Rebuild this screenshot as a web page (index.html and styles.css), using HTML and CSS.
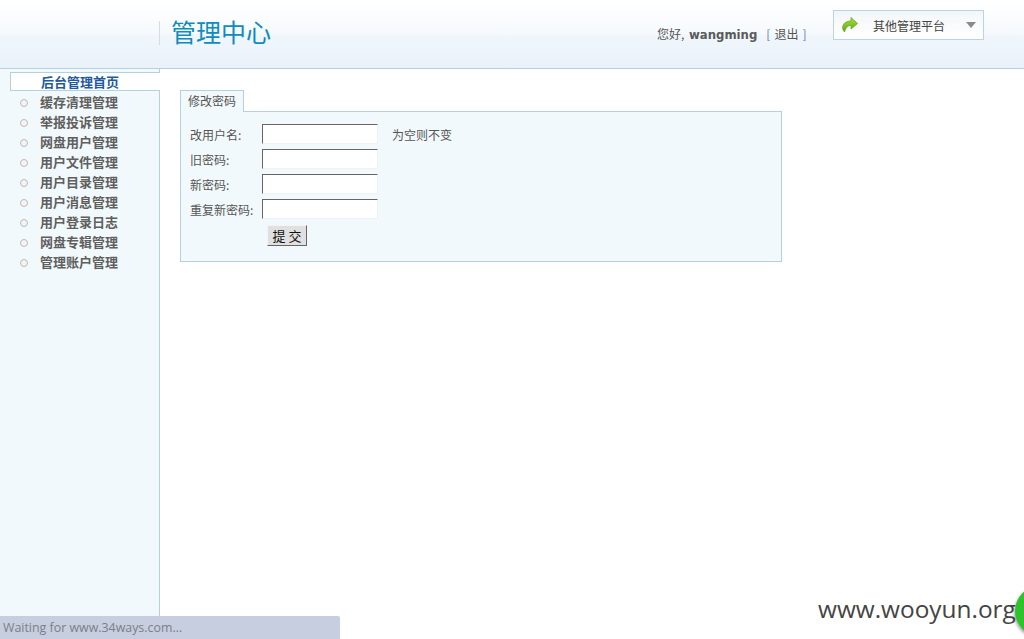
FILE: index.html
```html
<!DOCTYPE html>
<html lang="zh-CN">
<head>
<meta charset="utf-8">
<title>管理中心</title>
<link rel="stylesheet" href="styles.css">
</head>
<body>
<header class="header">
  <div class="logo"><h1 class="title">管理中心</h1></div>
  <div class="user">您好<span class="comma">,</span> <b class="name">wangming</b><a class="logout"><span class="br">[</span><span class="out">退出</span><span class="br">]</span></a></div>
  <div class="switch">
    <svg class="switch-icon" width="16" height="16" viewBox="0 0 16 16"><defs><linearGradient id="arrow" x1="0" y1="0" x2="0" y2="1"><stop offset="0" stop-color="#a8e040"/><stop offset="1" stop-color="#5da814"/></linearGradient></defs><path d="M9 0.5 L15.5 6.5 L9 12 V8.5 C6 8.5 4 10 2.5 15 C0.5 13 0 10 1.5 7.5 C3 5 6 4 9 4 Z" fill="url(#arrow)" stroke="#6aa81a" stroke-width="0.8"/></svg>
    <span class="switch-text">其他管理平台</span>
    <span class="caret"></span>
  </div>
</header>
<div class="main">
  <nav class="side">
    <a class="item active">后台管理首页</a>
    <a class="item"><i class="dot"></i>缓存清理管理</a>
    <a class="item"><i class="dot"></i>举报投诉管理</a>
    <a class="item"><i class="dot"></i>网盘用户管理</a>
    <a class="item"><i class="dot"></i>用户文件管理</a>
    <a class="item"><i class="dot"></i>用户目录管理</a>
    <a class="item"><i class="dot"></i>用户消息管理</a>
    <a class="item"><i class="dot"></i>用户登录日志</a>
    <a class="item"><i class="dot"></i>网盘专辑管理</a>
    <a class="item"><i class="dot"></i>管理账户管理</a>
  </nav>
  <section class="content">
    <div class="tab">修改密码</div>
    <form class="panel">
      <div class="row"><label class="label">改用户名:</label><input class="field" type="text"><span class="hint">为空则不变</span></div>
      <div class="row"><label class="label">旧密码:</label><input class="field" type="password"></div>
      <div class="row"><label class="label">新密码:</label><input class="field" type="password"></div>
      <div class="row"><label class="label">重复新密码:</label><input class="field" type="password"></div>
      <div class="actions"><button class="submit" type="button">提 交</button></div>
    </form>
  </section>
</div>
<div class="status">Waiting for www.34ways.com...</div>
<div class="mark">www.wooyun.org</div>
<div class="ball"></div>
</body>
</html>
```
FILE: styles.css
```css
* { box-sizing: border-box; }
html, body { margin: 0; height: 100%; }
body {
  width: 1024px;
  height: 639px;
  overflow: hidden;
  position: relative;
  display: flex;
  flex-direction: column;
  background: #fff;
  color: #555;
  font: 12px "Noto Sans CJK SC", "Liberation Sans", sans-serif;
}
.header {
  height: 69px;
  flex: none;
  display: flex;
  border-bottom: 1px solid #b4d2dc;
  background: linear-gradient(#fff 0, #f6fafd 34px, #f0f6fc 35px, #eaf2f9 68px);
}
.logo {
  width: 160px;
  height: 24px;
  margin-top: 21px;
  border-right: 1px solid #d2dee4;
  flex: none;
}
.title {
  margin: -7px 0 0 171px;
  width: 120px;
  font-size: 25px;
  line-height: 34px;
  font-weight: 400;
  color: #0f8cc0;
  white-space: nowrap;
}
.user {
  margin: 25px 0 0 497px;
  width: 176px;
  flex: none;
  line-height: 18px;
  white-space: nowrap;
  color: #555;
}
.name { font: bold 11.7px "DejaVu Sans", sans-serif; color: #5a5a5a; margin-left: 2px; }
.logout { margin-left: 9px; }
.br { color: #5a82b0; }
.out { margin: 0 4px; }
.switch {
  width: 151px;
  height: 30px;
  margin-top: 10px;
  flex: none;
  display: flex;
  align-items: center;
  padding-left: 9px;
  border: 1px solid #bcd4df;
  background: linear-gradient(#f3f6f8, #fff);
}
.switch-icon { flex: none; margin-left: -1px; }
.switch-text { margin-left: 15px; color: #444; white-space: nowrap; }
.caret {
  margin-left: 21px;
  width: 0;
  height: 0;
  border-left: 5px solid transparent;
  border-right: 5px solid transparent;
  border-top: 6px solid #8a8a8a;
}
.main { flex: 1; display: flex; min-height: 0; }
.side {
  width: 160px;
  flex: none;
  padding: 3px 0 0 10px;
  background: #f2f9fc;
  border-right: 1px solid #b4d2dc;
  display: flex;
  flex-direction: column;
}
.item {
  height: 20px;
  display: flex;
  align-items: center;
  padding-left: 30px;
  padding-bottom: 2px;
  font-size: 13px;
  font-weight: 700;
  color: #5f5f5f;
  white-space: nowrap;
}
.item.active {
  height: 19px;
  margin-right: -1px;
  padding-left: 30px;
  padding-bottom: 1px;
  margin-bottom: 1px;
  background: #fff;
  color: #1f5a9e;
  border: 1px solid #b4d2dc;
  border-right: 0;
}
.dot {
  width: 8px;
  height: 8px;
  margin: 4px 12px 0 -20px;
  flex: none;
  border: 1px solid #bbb;
  border-radius: 50%;
  background: #f4f4f4;
}
.content { flex: 1; padding: 21px 0 0 20px; }
.tab {
  position: relative;
  z-index: 1;
  width: 64px;
  height: 22px;
  padding-left: 7px;
  line-height: 19px;
  background: #f2f9fc;
  border: 1px solid #b4d2dc;
  border-bottom: 0;
  color: #555;
  white-space: nowrap;
}
.panel {
  width: 602px;
  height: 151px;
  margin-top: -1px;
  padding: 12px 0 0 9px;
  background: #f2f9fc;
  border: 1px solid #b4d2dc;
}
.row { height: 25px; display: flex; align-items: flex-start; }
.label { width: 72px; flex: none; padding-top: 1px; line-height: 20px; white-space: nowrap; }
.field {
  width: 116px;
  height: 20px;
  margin: 0;
  padding: 0;
  flex: none;
  background: #fff;
  border: 1px solid;
  border-color: #666 #eef2f4 #eef2f4 #666;
}
.hint { margin-left: 14px; padding-top: 1px; line-height: 20px; white-space: nowrap; }
.actions { padding: 1px 0 0 77px; }
.submit {
  width: 40px;
  height: 21px;
  padding: 0;
  font: 13px "Noto Sans CJK SC", sans-serif;
  line-height: 18px;
  color: #111;
  background: #e0e0e0;
  border: 1px solid;
  border-color: #f4f4f4 #666 #666 #f4f4f4;
}
.status {
  position: absolute;
  left: 0;
  bottom: 0;
  width: 340px;
  height: 23px;
  padding-left: 3px;
  font: 12.4px/24px "Open Sans", "Liberation Sans", sans-serif;
  color: #7c7f88;
  background: #c7cedf;
  border-top-right-radius: 2px;
  white-space: nowrap;
}
.mark {
  position: absolute;
  left: 818px;
  top: 592px;
  font: 24.4px/34px "Open Sans", "Liberation Sans", sans-serif;
  color: #444;
  white-space: nowrap;
}
.ball {
  position: absolute;
  left: 1015px;
  top: 586px;
  width: 50px;
  height: 50px;
  border-radius: 50%;
  background: #2ec32a;
  box-shadow: -1px 2px 3px rgba(0,0,0,.35);
}
```
